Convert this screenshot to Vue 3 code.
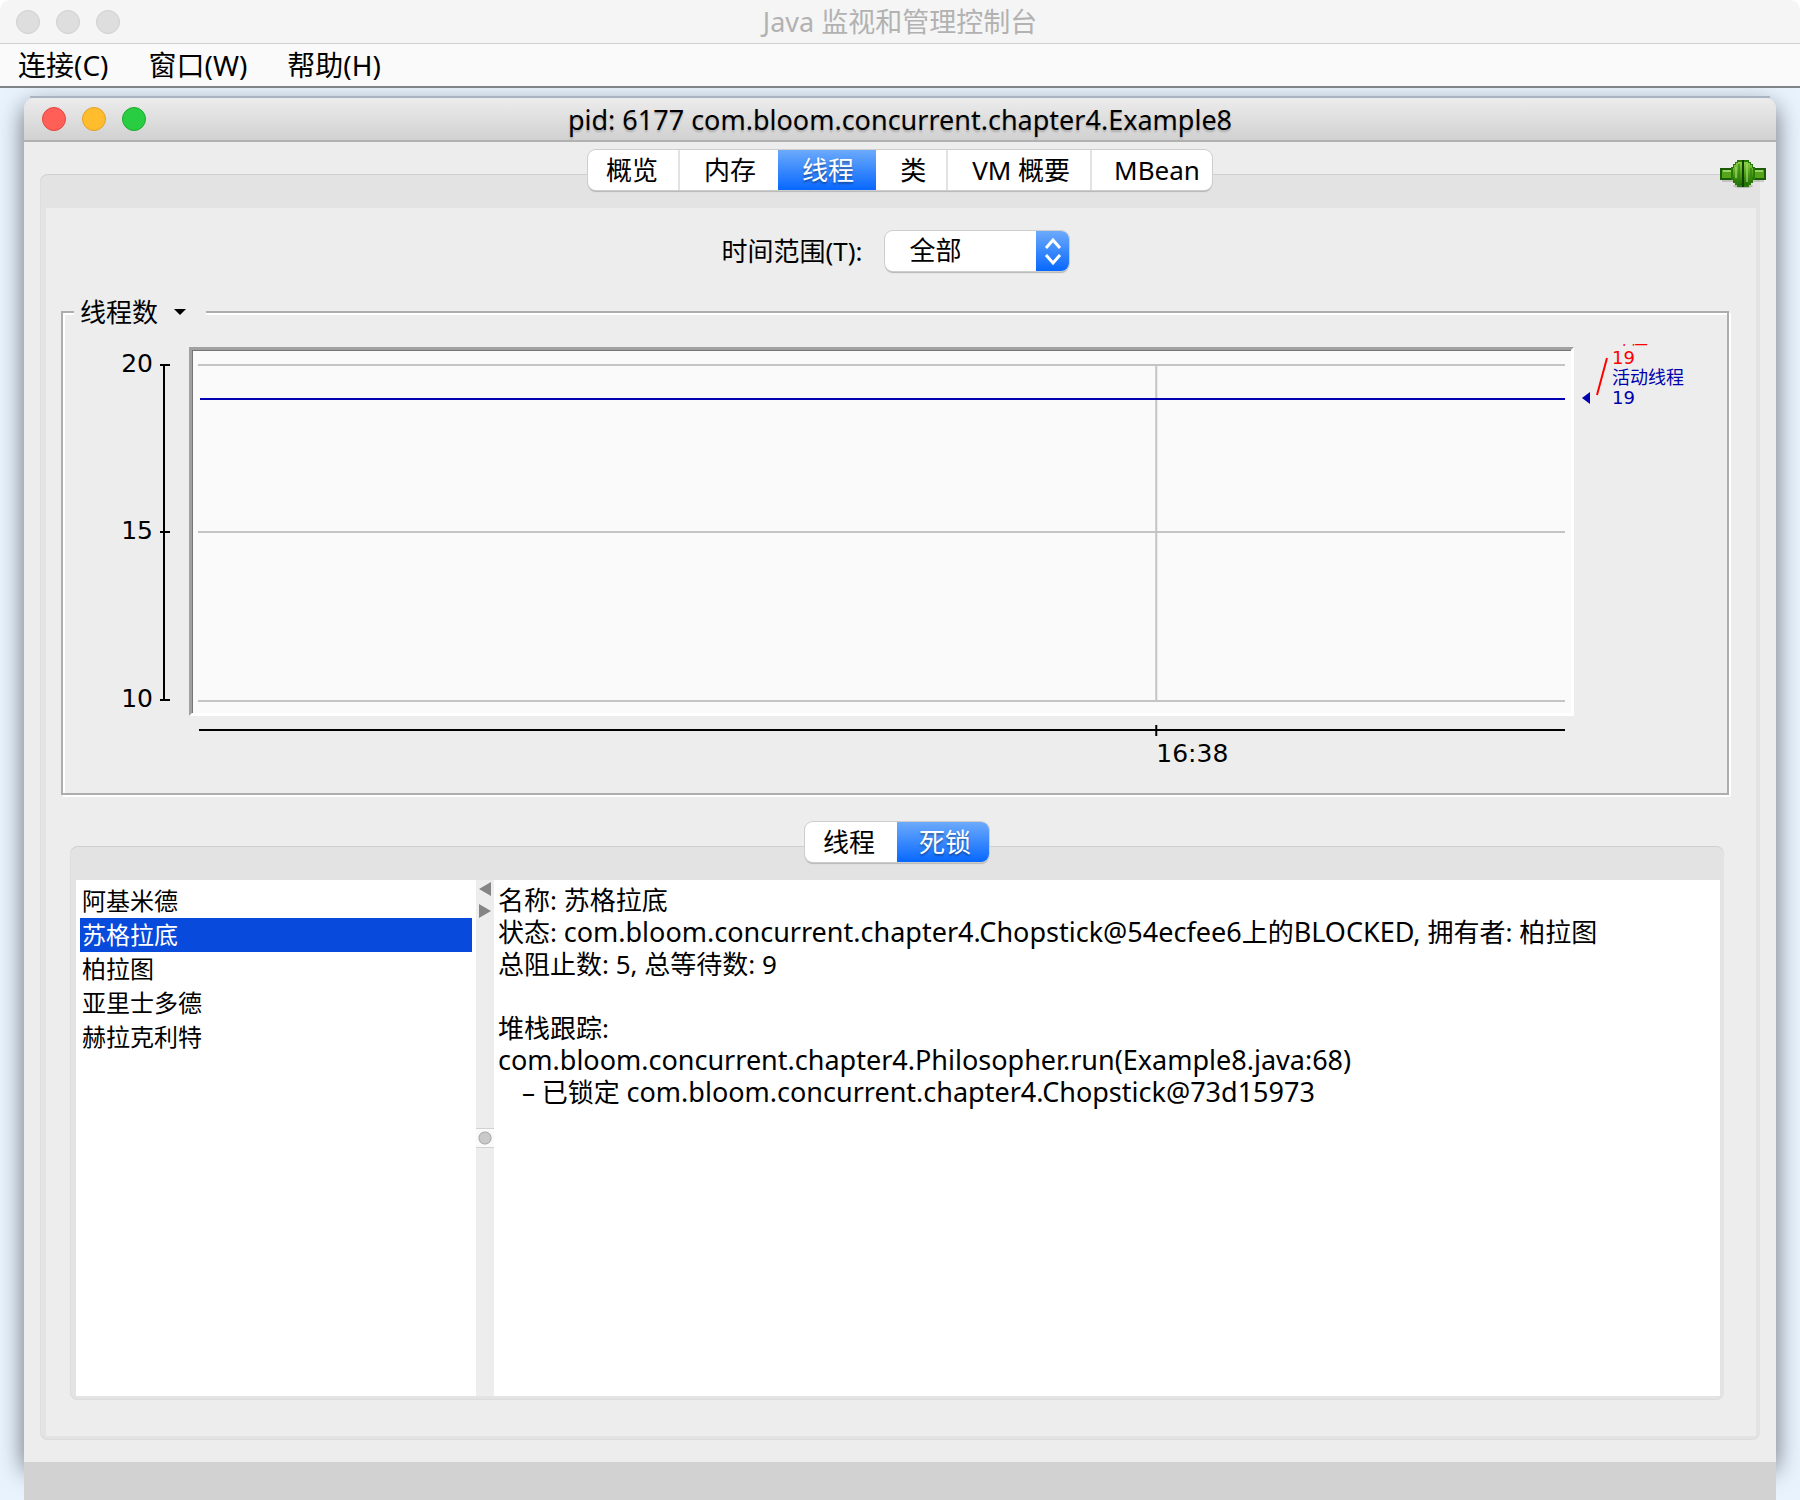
<script setup>
import { ref } from 'vue'

const menus = ['连接(C)', '窗口(W)', '帮助(H)']
const mainTabs = ['概览', '内存', '线程', '类', 'VM 概要', 'MBean']
const lowerTabs = ['线程', '死锁']
const threads = ['阿基米德', '苏格拉底', '柏拉图', '亚里士多德', '赫拉克利特']

const mainTab = ref('线程')
const lowerTab = ref('死锁')
const selected = ref('苏格拉底')
const range = ref('全部')

const yTicks = [
  { label: '20', y: 18 },
  { label: '15', y: 185 },
  { label: '10', y: 353 }
]
</script>

<template>
  <div class="console">
    <header class="titlebar">
      <div class="lights">
        <span class="light off"></span>
        <span class="light off"></span>
        <span class="light off"></span>
      </div>
      <h1 class="title">Java 监视和管理控制台</h1>
    </header>
    <nav class="menubar">
      <button v-for="m in menus" :key="m" type="button" class="menu">{{ m }}</button>
    </nav>

    <div class="desktop">
      <section class="window">
        <header class="window-bar">
          <div class="lights">
            <span class="light red"></span>
            <span class="light yellow"></span>
            <span class="light green"></span>
          </div>
          <h2 class="window-title">pid: 6177 com.bloom.concurrent.chapter4.Example8</h2>
        </header>

        <main class="body">
          <svg class="plug" width="46" height="30" viewBox="0 0 46 30" role="img" aria-label="已连接">
            <defs>
              <linearGradient id="ball" x1="0" y1="0" x2="0" y2="1">
                <stop offset="0" stop-color="#8ccf4a" />
                <stop offset="0.45" stop-color="#55a51b" />
                <stop offset="1" stop-color="#1f6a06" />
              </linearGradient>
            </defs>
            <ellipse cx="23" cy="27" rx="10" ry="2" fill="#000" opacity="0.18" />
            <path d="M2 21h42v2H2z" fill="#000" opacity="0.15" />
            <rect x="1" y="10" width="44" height="10" fill="#55a51b" stroke="#1b5c06" stroke-width="2" />
            <path d="M3 12h40" stroke="#9bd266" stroke-width="2" />
            <path d="M17 1h12v2h2v2h2v3h2v13h-2v3h-2v2h-2v2H17v-2h-2v-2h-2v-3h-2V8h2V5h2V3h2z" fill="#2a7a0a" />
            <path d="M18 3h4v23h-4v-2h-2v-3h-2v-3h-1V9h1V6h2V4h2zM24 3h4v1h2v2h2v3h1v9h-1v3h-2v3h-2v2h-4z" fill="url(#ball)" />
            <path d="M16 8v11M27 5v18" stroke="#a5dc74" stroke-width="2" opacity="0.6" />
            <path d="M19 5v20M31 9v10" stroke="#2d820b" stroke-width="2" opacity="0.6" />
            <path d="M23 1v27" stroke="#0f4203" stroke-width="2" />
          </svg>

          <div class="tabs" role="tablist">
            <button v-for="t in mainTabs" :key="t" type="button" role="tab" class="tab"
              :class="{ active: mainTab === t }" :aria-selected="mainTab === t" @click="mainTab = t">{{ t }}</button>
          </div>

          <div class="pane outer">
            <div class="page">
              <div class="toolbar">
                <label for="range">时间范围(T):</label>
                <div class="picker">
                  <select id="range" v-model="range">
                    <option>全部</option>
                  </select>
                  <svg class="stepper" width="33" height="40" viewBox="0 0 33 40" aria-hidden="true">
                    <path d="M10 17l7-8 7 8M10 24l7 8 7-8" fill="none" stroke="#fff" stroke-width="3" />
                  </svg>
                </div>
              </div>

              <section class="group">
                <button type="button" class="group-title">
                  线程数
                  <svg width="12" height="6" viewBox="0 0 12 6" aria-hidden="true"><path d="M0 0h12L6 6z" /></svg>
                </button>
                <div class="chart">
                  <svg class="y-axis" width="126" height="369">
                    <path d="M101 17v337" class="axis" />
                    <g v-for="t in yTicks" :key="t.label">
                      <path :d="`M97 ${t.y}h10`" class="axis" />
                      <text x="90" :y="t.y + 7" text-anchor="end" class="num">{{ t.label }}</text>
                    </g>
                  </svg>
                  <div class="plot">
                    <svg class="series" width="100%" height="363">
                      <line x1="0" x2="100%" y1="15" y2="15" class="grid" />
                      <line x1="0" x2="100%" y1="182" y2="182" class="grid" />
                      <line x1="0" x2="100%" y1="351" y2="351" class="grid" />
                      <line x1="70.1%" x2="70.1%" y1="15" y2="351" class="grid" />
                      <line x1="2" x2="100%" y1="49" y2="49" class="live" />
                    </svg>
                  </div>
                  <svg class="marks" width="153" height="369">
                    <svg x="38" y="-3" width="80" height="2">
                      <text x="0" y="0" class="mark peak">峰值</text>
                    </svg>
                    <path d="M33 11L23 48" fill="none" stroke="#f00" stroke-width="2" />
                    <path d="M8 51l8-6v12z" fill="#0000b0" />
                    <text x="38" y="17" class="mark peak">19</text>
                    <text x="38" y="37" class="mark now">活动线程</text>
                    <text x="38" y="57" class="mark now">19</text>
                  </svg>
                </div>
                <div class="x-axis">
                  <svg class="series" width="100%" height="77">
                    <line x1="1" x2="100%" y1="14" y2="14" class="axis" />
                    <line x1="70.1%" x2="70.1%" y1="9" y2="20" class="axis" />
                    <text x="70.1%" y="46" class="num">16:38</text>
                  </svg>
                </div>
              </section>

              <div class="lower">
                <div class="tabs" role="tablist">
                  <button v-for="t in lowerTabs" :key="t" type="button" role="tab" class="tab"
                    :class="{ active: lowerTab === t }" :aria-selected="lowerTab === t" @click="lowerTab = t">{{ t }}</button>
                </div>
                <div class="pane">
                  <div class="split">
                    <ul class="threads" role="listbox" aria-label="线程">
                      <li v-for="t in threads" :key="t" role="option" :aria-selected="selected === t"
                        :class="{ chosen: selected === t }" @click="selected = t">{{ t }}</li>
                    </ul>
                    <div class="splitter">
                      <svg width="12" height="36" viewBox="0 0 12 36" aria-hidden="true">
                        <path d="M12 0v14L0 7zM0 22v14l12-7z" fill="#858585" />
                      </svg>
                      <span class="knob"></span>
                    </div>
                    <div class="detail">
                      <p>名称: 苏格拉底</p>
                      <p>状态: <span class="code">com.bloom.concurrent.chapter4.Chopstick@54ecfee6</span>上的<span class="code">BLOCKED, </span>拥有者: 柏拉图</p>
                      <p>总阻止数: 5, 总等待数: 9</p>
                      <p class="gap">堆栈跟踪:</p>
                      <p class="code">com.bloom.concurrent.chapter4.Philosopher.run(Example8.java:68)</p>
                      <p class="lock">– 已锁定 <span class="code">com.bloom.concurrent.chapter4.Chopstick@73d15973</span></p>
                    </div>
                  </div>
                </div>
              </div>
            </div>
          </div>
        </main>
      </section>
      <div class="dock"></div>
    </div>
  </div>
</template>

<style>
body {
  margin: 0;
  background: #fff;
}
</style>

<style scoped>
* {
  box-sizing: border-box;
}

.console {
  display: flex;
  flex-direction: column;
  min-height: 100vh;
  font: 26px/32px 'Noto Sans', 'Noto Sans CJK SC', sans-serif;
  color: #000;
}

button,
select {
  font: inherit;
  color: inherit;
  border: 0;
  padding: 0;
  margin: 0;
  background: none;
}

h1,
h2,
p,
ul {
  margin: 0;
  padding: 0;
  font-size: inherit;
  font-weight: 400;
}

.titlebar,
.window-bar {
  display: grid;
  grid-template-columns: 1fr auto 1fr;
  align-items: center;
  height: 44px;
}

.titlebar {
  padding: 0 16px;
  border-radius: 10px 10px 0 0;
  background: #f5f5f5;
  border-bottom: 1px solid #cfcfcf;
}

.title {
  font-size: 27px;
  color: #b2b2b2;
}

.lights {
  display: flex;
  gap: 16px;
}

.light {
  width: 24px;
  height: 24px;
  border-radius: 50%;
  border: 1px solid;
}

.off {
  background: #dedede;
  border-color: #cfcfcf;
}

.red {
  background: #ff5f57;
  border-color: #e2463f;
}

.yellow {
  background: #ffbd2e;
  border-color: #e0a028;
}

.green {
  background: #28cd41;
  border-color: #1bab2e;
}

.menubar {
  display: flex;
  gap: 40px;
  height: 44px;
  padding: 0 18px;
  background: #fafafa;
  border-bottom: 2px solid #7f8487;
}

.menu {
  font-size: 28px;
}

.desktop {
  display: flex;
  flex-direction: column;
  flex: 1;
  padding: 10px 24px 0;
  background: #e8f3fe;
  overflow: hidden;
}

.window {
  position: relative;
  border-radius: 10px 10px 0 0;
  background: #ededed;
  box-shadow: 0 8px 24px rgba(0, 0, 0, 0.56);
}

.window::before {
  content: '';
  position: absolute;
  top: -2px;
  left: 6px;
  right: 6px;
  height: 2px;
  background: #a9b3c1;
}

.dock {
  position: relative;
  flex: 1;
  min-height: 38px;
  background: #d2d2d2;
}

.window-bar {
  padding: 0 18px;
  border-radius: 10px 10px 0 0;
  background: linear-gradient(#ececec, #d1d1d1);
  border-bottom: 2px solid #b1b1b1;
}

.window-title {
  padding-top: 2px;
  font-size: 27px;
  text-shadow: 0 2px 2px rgba(0, 0, 0, 0.2);
}

.body {
  position: relative;
  padding: 8px 16px 22px;
}

.plug {
  position: absolute;
  top: 17px;
  right: 10px;
  z-index: 2;
}

.tabs {
  position: relative;
  z-index: 1;
  display: flex;
  width: max-content;
  margin: 0 auto -16px;
  height: 40px;
  border-radius: 8px;
  background: #fff;
  box-shadow: 0 0 0 1px #cdcdcd, 0 2px 1px #b5b5b5;
  overflow: hidden;
}

.tab {
  padding: 0 20px 0 24px;
  border-right: 2px solid #e2e2e2;
  line-height: 36px;
}

.tab:first-child {
  padding-left: 18px;
}

.tab:last-child {
  padding: 0 12px 0 22px;
  border-right: 0;
}

.tab:has(+ .active) {
  border-right-color: transparent;
}

.tab.active {
  padding-right: 22px;
  border-right: 0;
  color: #fff;
  background: linear-gradient(#6caafb, #0768ff);
  text-shadow: 0 2px 2px rgba(0, 0, 0, 0.35);
}

.tab.active:last-child {
  padding-right: 18px;
}

.pane {
  padding: 33px 4px 4px 6px;
  border-radius: 8px;
  border-top: 1px solid #cfcfcf;
  background: #e3e3e3;
  box-shadow: inset 0 -1px 0 #dcdcdc, inset 1px 0 0 #dedede;
}

.page {
  padding: 23px 12px 36px 0;
  background: #ededed;
}

.toolbar {
  display: flex;
  align-items: center;
  justify-content: center;
  gap: 22px;
}

.picker {
  position: relative;
  width: 184px;
  height: 40px;
}

select {
  appearance: none;
  width: 100%;
  height: 40px;
  padding: 0 40px 2px 25px;
  border-radius: 8px;
  background: #fff;
  box-shadow: 0 0 0 1px #cdcdcd, 0 2px 1px #b5b5b5;
}

.stepper {
  position: absolute;
  top: 0;
  right: 0;
  border-radius: 0 8px 8px 0;
  background: linear-gradient(#6caafb, #0768ff);
  pointer-events: none;
}

.group {
  margin: 40px 15px 0;
  border: 2px solid #adadad;
  box-shadow: 2px 2px 0 #fff, inset 2px 2px 0 #fff;
}

.group-title {
  display: flex;
  align-items: center;
  gap: 16px;
  height: 32px;
  margin: -17px 0 19px 11px;
  padding: 0 20px 0 6px;
  background: #ededed;
}

.chart {
  display: flex;
}

.y-axis,
.marks {
  flex: none;
  overflow: visible;
}

.plot {
  flex: 1;
  height: 369px;
  padding: 0 6px;
  background: #fafafa;
  border: 3px solid;
  border-color: #a1a1a1 #fff #fff #a1a1a1;
  box-shadow: inset 1px 1px 0 #757575;
}

.series {
  display: block;
  overflow: visible;
}

.x-axis {
  padding: 0 162px 0 135px;
}

.axis {
  fill: none;
  stroke: #000;
  stroke-width: 2;
}

.grid {
  stroke: #c4c4c4;
  stroke-width: 2;
}

.live {
  stroke: #0000b0;
  stroke-width: 2;
}

.num {
  font: 25px 'DejaVu Sans', sans-serif;
}

.mark {
  font: 18px 'DejaVu Sans', 'Noto Sans CJK SC', sans-serif;
}

.peak {
  fill: #f00;
}

.now {
  fill: #0000b0;
}

.lower {
  margin: 27px 20px 0 24px;
}

.split {
  display: flex;
  min-height: 516px;
  background: #fff;
}

.threads {
  flex: 0 0 400px;
  padding: 4px;
  list-style: none;
  font-size: 24px;
  line-height: 34px;
}

.threads li {
  padding-left: 2px;
}

.threads .chosen {
  color: #fff;
  background: #084adb;
}

.splitter {
  display: flex;
  flex-direction: column;
  align-items: center;
  flex: 0 0 18px;
  padding-top: 2px;
  background: #ededed;
}

.knob {
  width: 100%;
  height: 20px;
  margin-top: 210px;
  border: solid #d2d2d2;
  border-width: 1px 0;
  background: radial-gradient(circle, #c9c9c9 5px, #aaa 6px, #fafafa 7px);
}

.detail {
  flex: 1;
  padding: 4px;
}

.detail .gap {
  margin-top: 32px;
}

.detail .lock {
  padding-left: 24px;
}

.code {
  font-size: 27px;
}
</style>
